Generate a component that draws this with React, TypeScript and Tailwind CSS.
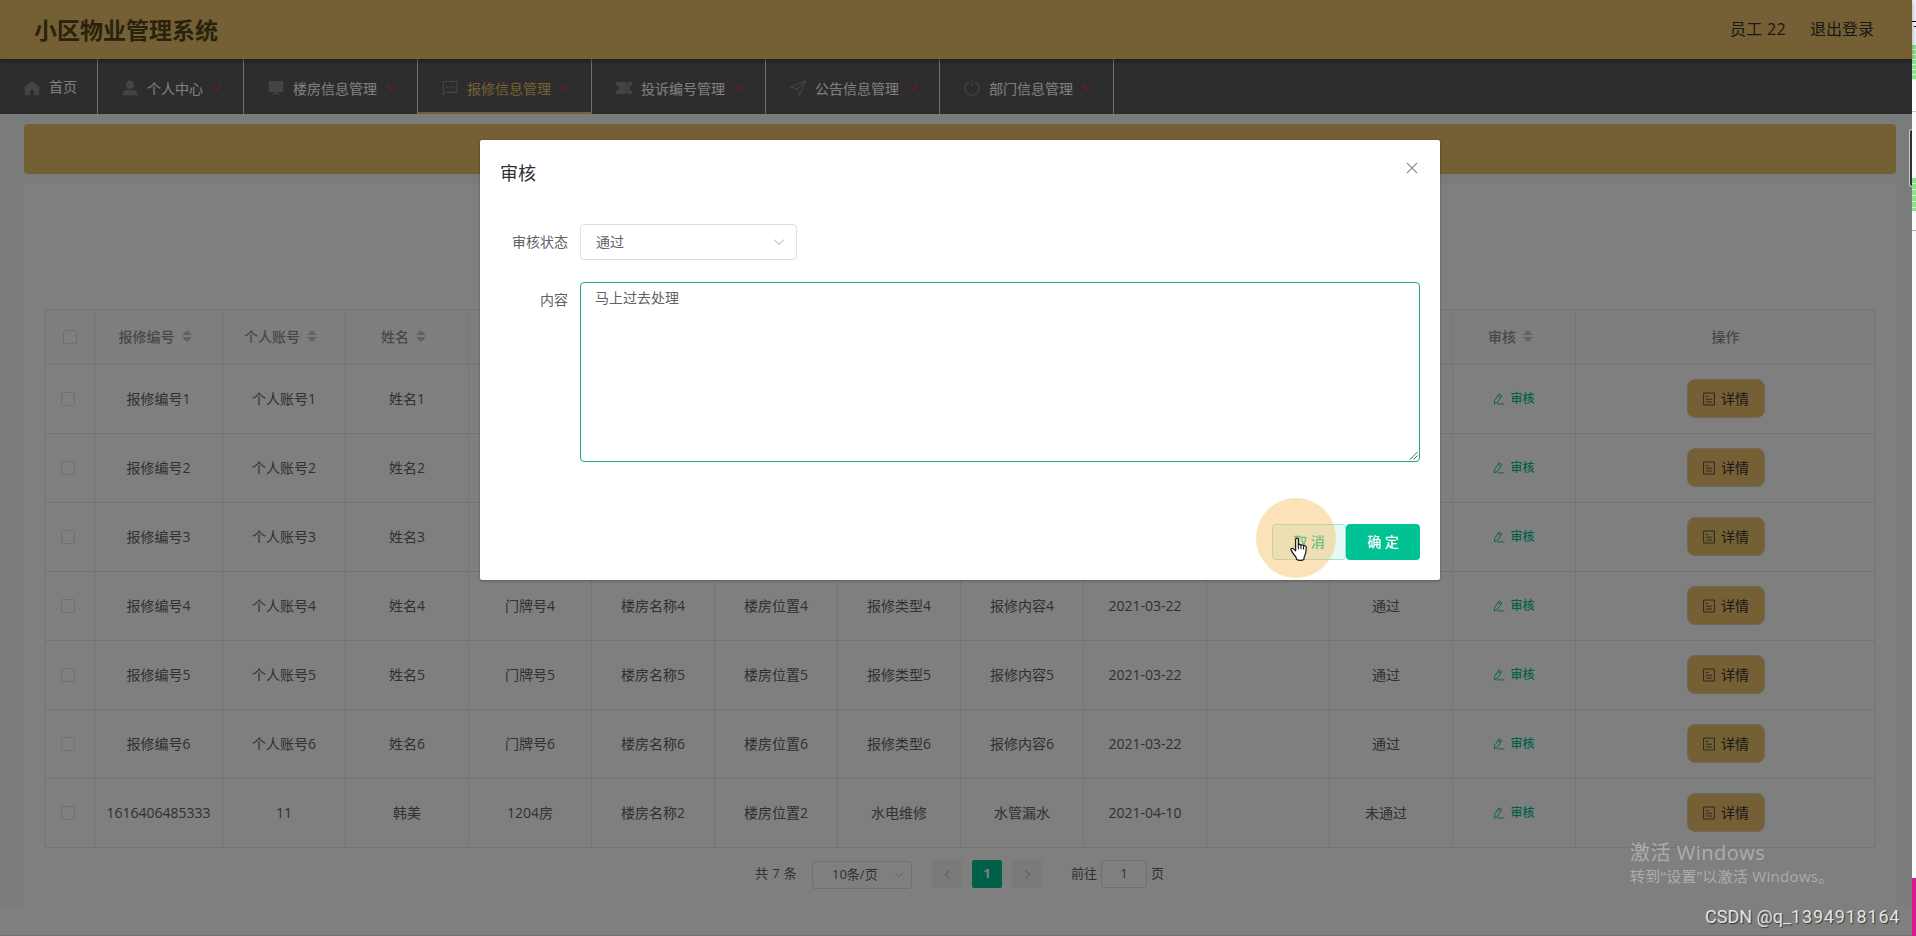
import React from 'react';

const NAV_ITEMS = [
  { title: '首页', icon: 'home' },
  { title: '个人中心', icon: 'user' },
  { title: '楼房信息管理', icon: 'platform' },
  { title: '报修信息管理', icon: 'chat' },
  { title: '投诉编号管理', icon: 'ticket' },
  { title: '公告信息管理', icon: 'position' },
  { title: '部门信息管理', icon: 'power' },
];

const COLUMNS = [
  '报修编号',
  '个人账号',
  '姓名',
  '门牌号',
  '楼房名称',
  '楼房位置',
  '报修类型',
  '报修内容',
  '报修日期',
  '审核回复',
  '审核状态',
  '审核',
];

const ROWS = [
  ...[1, 2, 3, 4, 5, 6].map((n) => [
    `报修编号${n}`,
    `个人账号${n}`,
    `姓名${n}`,
    `门牌号${n}`,
    `楼房名称${n}`,
    `楼房位置${n}`,
    `报修类型${n}`,
    `报修内容${n}`,
    '2021-03-22',
    '',
    n > 3 ? '通过' : '',
  ]),
  ['1616406485333', '11', '韩美', '1204房', '楼房名称2', '楼房位置2', '水电维修', '水管漏水', '2021-04-10', '', '未通过'],
];

const GRID = 'grid grid-cols-[50px_128px_repeat(11,123px)_300px]';

const NavIcon = ({ name }: { name: string }) => (
  <svg viewBox="0 0 18 18" className="h-[18px] w-6 shrink-0" fill="none" stroke="none">
    {name === 'home' && <path fill="currentColor" d="M9 2 2 8v8h5v-5h4v5h5V8z" stroke="currentColor" strokeLinejoin="round" strokeWidth=".6" />}
    {name === 'user' && (
      <g fill="currentColor">
        <ellipse cx="9" cy="5.8" rx="4" ry="4.3" />
        <path d="M1.8 16.3v-1.8c0-2.2 1.6-3.4 3.6-3.4h7.2c2 0 3.6 1.2 3.6 3.4v1.8z" />
      </g>
    )}
    {name === 'platform' && (
      <g fill="currentColor">
        <path d="M1.8 2h14.4v11.2H1.8zM8 13h2v2H8z" />
        <path d="M5 14.8h8v.9H5z" />
      </g>
    )}
    {name === 'chat' && (
      <g stroke="currentColor" strokeWidth="1.1">
        <path d="M4.5 13.4H16V2.5H2.3v13.3z" strokeLinejoin="round" />
        <path d="M5.2 8h1.4M8.3 8h1.4M11.4 8h1.4" strokeWidth="1.4" />
      </g>
    )}
    {name === 'ticket' && (
      <path
        fill="currentColor"
        d="M1 3h9.8v1.6h1.4V3H17v3.4a2.6 2.6 0 0 0 0 5.2V15h-4.8v-1.6h-1.4V15H1v-3.4a2.6 2.6 0 0 0 0-5.2zM10.8 6.3v1.8h1.4V6.3zm0 3.6v1.8h1.4V9.9z"
        fillRule="evenodd"
      />
    )}
    {name === 'position' && <path d="M16.6 1.8 1.2 8l7 1.8 2.2 6.6z M16.6 1.8 8.2 9.8" stroke="currentColor" strokeWidth="1" strokeLinejoin="round" />}
    {name === 'power' && <path d="M6 3.1a7 7 0 1 0 6 0M9 1.4v6" stroke="currentColor" strokeWidth="1.1" />}
  </svg>
);

const Chevron = ({ className }: { className: string }) => (
  <svg viewBox="0 0 12 12" className={className} fill="none" stroke="currentColor" strokeWidth="1.1">
    <path d="m1.2 3.6 4.8 4.8 4.8-4.8" />
  </svg>
);

const SortCaret = () => (
  <svg viewBox="0 0 24 14" className="h-[14px] w-6 text-[#c0c4cc]" fill="currentColor">
    <path d="M12 1 17 6H7zM12 13 7 8h10z" />
  </svg>
);

const Checkbox = () => <span className="block h-[14px] w-[14px] rounded-[2px] border border-[#dcdfe6] bg-white" />;

const Header = () => (
  <header className="relative z-10 flex h-[59px] items-center justify-between bg-[#e8c068] pt-px pr-[38px] pl-[34px] shadow-[0_2px_5px_rgba(0,0,0,0.35)]">
    <h1 className="text-[23px] font-bold text-[#54441a]">小区物业管理系统</h1>
    <div className="flex gap-6 pb-0.5 text-[16px] text-[#333]">
      <span className="tracking-[0.3px]">员工 22</span>
      <span>退出登录</span>
    </div>
  </header>
);

const Nav = () => (
  <nav className="flex h-[55px] bg-[#5b5b5b]">
    {NAV_ITEMS.map((item, index) => (
      <div
        key={item.title}
        className={`flex items-center border-r border-r-[#e0e0e0] pl-5 pr-5 text-[14px] ${
          index === 3 ? 'border-b-2 border-b-[#e8c068] pt-[5px] text-[#e8c068]' : index === 0 ? 'text-white' : 'pt-[3px] text-white'
        }`}
      >
        <span className={`text-[#84888f] ${index === 0 ? 'pt-0.5' : ''}`}>
          <NavIcon name={item.icon} />
        </span>
        <span className={`ml-[5px] ${index === 0 ? 'pb-px' : ''}`}>{item.title}</span>
        {index > 0 && <Chevron className="mb-[3px] ml-2 h-3 w-3 text-[#f03048]" />}
      </div>
    ))}
  </nav>
);

const RepairTable = () => (
  <div className="border-t border-l border-[#e6e8f0] text-[14px]">
    <div className={`${GRID} h-[55px] bg-[#fcfcfc] font-medium text-[#909399]`}>
      <div className="flex items-center justify-center border-r border-b border-[#e6e8f0]">
        <Checkbox />
      </div>
      {COLUMNS.map((title) => (
        <div key={title} className="flex items-center justify-center border-r border-b border-[#e6e8f0] pb-0.5">
          <span>{title}</span>
          <SortCaret />
        </div>
      ))}
      <div className="flex items-center justify-center border-r border-b border-[#e6e8f0] pb-px">操作</div>
    </div>
    {ROWS.map((row) => (
      <div key={row[0]} className={`${GRID} h-[69px] text-[#606266]`}>
        <div className="flex items-center justify-center border-r border-b border-[#e6e8f0] pr-[3px]">
          <Checkbox />
        </div>
        {row.map((cell, index) => (
          <div
            key={index}
            className={`flex items-center justify-center border-r border-b border-[#e6e8f0] pb-0.5 ${index === 10 ? 'pr-[10px]' : ''}`}
          >
            {cell}
          </div>
        ))}
        <div className="flex items-center justify-center gap-[5px] border-r border-b border-[#e6e8f0] text-[12px] font-medium text-[#00c292]">
          <svg viewBox="0 0 12 12" className="h-3 w-3" fill="none" stroke="currentColor" strokeWidth=".9">
            <path d="M1.6 7.6 6 .9l2.8 1.7-4.4 6.8-3 1.5zM5 2.5l2.8 1.7M4.4 10.9h7" />
          </svg>
          审核
        </div>
        <div className="flex items-center justify-center border-r border-b border-[#e6e8f0] pb-px">
          <button className="flex h-[39px] w-[78px] items-center justify-center gap-[5px] rounded-lg border border-[#dcd0a8] bg-[#e8c068] text-[#333]">
            <svg viewBox="0 0 14 14" className="h-[14px] w-[14px]" fill="none" stroke="currentColor" strokeWidth=".8">
              <path d="M1.6 1h10.8v12H1.6zM4 4.5h2.5M4 7.2h6M4 10h6" />
            </svg>
            详情
          </button>
        </div>
      </div>
    ))}
  </div>
);

const Pagination = () => (
  <div className="mt-3 flex h-7 items-center pl-[711px] text-[13px] text-[#606266]">
    <span className="w-[57px] tracking-[0.4px]">共 7 条</span>
    <div className="mt-0.5 flex h-7 w-[100px] items-center rounded-[3px] border border-[#dcdfe6] pl-[19px]">
      <span className="w-[62px] pb-px">10条/页</span>
      <Chevron className="h-[10px] w-[10px] text-[#c0c4cc]" />
    </div>
    <div className="ml-5 flex gap-[10px] font-bold">
      <span className="flex h-7 w-[30px] items-center justify-center rounded-[2px] bg-[#f4f4f5]">
        <Chevron className="h-[11px] w-[11px] rotate-90 text-[#b4b8c0]" />
      </span>
      <span className="flex h-7 w-[30px] items-center justify-center rounded-[2px] bg-[#00c292] text-white">1</span>
      <span className="flex h-7 w-[30px] items-center justify-center rounded-[2px] bg-[#f4f4f5]">
        <Chevron className="h-[11px] w-[11px] -rotate-90 text-[#b4b8c0]" />
      </span>
    </div>
    <span className="ml-[29px]">前往</span>
    <span className="ml-1 flex h-7 w-[46px] items-center justify-center rounded-[3px] border border-[#dcdfe6]">1</span>
    <span className="ml-1">页</span>
  </div>
);

const ReviewDialog = () => (
  <div className="absolute top-[140px] left-[480px] h-[440px] w-[960px] rounded-[2px] bg-white p-5 text-[14px] text-[#606266] shadow-[0_1px_3px_rgba(0,0,0,0.3)]">
    <div className="flex h-6 justify-between">
      <h2 className="pt-px text-[18px] leading-6 text-[#303133]">审核</h2>
      <svg viewBox="0 0 16 16" className="h-4 w-4 text-[#909399]" fill="none" stroke="currentColor" strokeWidth="1.1">
        <path d="m3 3 10 10M13 3 3 13" />
      </svg>
    </div>
    <div className="mt-10 flex h-9 items-center">
      <label className="w-20 pr-3 pb-0.5 text-right">审核状态</label>
      <div className="flex h-9 w-[217px] items-center justify-between rounded-[4px] border border-[#dcdfe6] pr-[11px] pb-px pl-[15px]">
        <span className="pb-px">通过</span>
        <Chevron className="h-3 w-3 text-[#c0c4cc]" />
      </div>
    </div>
    <div className="mt-[22px] flex">
      <label className="w-20 pr-3 text-right leading-9">内容</label>
      <div className="flex h-[180px] w-[840px] justify-between rounded-[4px] border border-[#1fa587] pt-1 pl-[14px] leading-[21px]">
        马上过去处理
        <svg viewBox="0 0 10 10" className="mr-px mb-px h-[9px] w-[9px] self-end text-[#444]" fill="none" stroke="currentColor" strokeWidth="1">
          <path d="M1 9.5 9.5 1M5 9.5 9.5 5" />
        </svg>
      </div>
    </div>
    <div className="mt-[62px] flex justify-end font-medium">
      <button className="h-9 w-[74px] rounded-[4px] border border-[#99e7d3] bg-[#e6f9f4] pb-0.5 text-[#00c292]">取 消</button>
      <button className="h-9 w-[74px] rounded-[4px] bg-[#00c292] pb-0.5 text-white">确 定</button>
    </div>
  </div>
);

// click highlight and hand pointer
const Pointer = () => (
  <>
    <div className="absolute top-[498px] left-[1256px] h-20 w-20 rounded-full bg-[rgba(246,187,92,0.43)]" />
    <svg viewBox="0 0 18 24" className="absolute top-[537px] left-[1290px] h-[25px] w-[19px]">
      <path
        d="M5.3 2.3c0-1.7 2.6-1.7 2.6 0v5.4c.3-1 2.4-.9 2.5.4.5-.8 2.4-.6 2.5.7.6-.8 2.5-.5 2.5 1.2.2 4-.3 6.4-1.6 8.4-.4.8-.6 2-.6 3.3-1.6 1-5.2 1-6.9 0 0-1.5-.7-2.6-1.7-3.7C3.2 16.5 1.7 14 .9 12.6c-.6-1.5 1.1-2.3 2.3-1.2l2.1 2z"
        fill="#fff"
        stroke="#111"
        strokeWidth="1.1"
        strokeLinejoin="round"
      />
      <path d="M7.9 7.7v4M10.4 8.3v3.5M12.9 9v3" stroke="#111" strokeWidth="1" />
    </svg>
  </>
);

const Watermark = () => (
  <>
    <div className="absolute top-[839px] left-[1630px] text-[#adadad]">
      <p className="text-[20px] leading-[28px] tracking-[0.5px]">激活 Windows</p>
      <p className="text-[15px] leading-[19px] tracking-[0.3px]">转到“设置”以激活 Windows。</p>
    </div>
    <p className="absolute top-[903px] left-[1705px] font-[Roboto,sans-serif] text-[18px] leading-[28px] whitespace-nowrap text-[#e4e4e4] [text-shadow:1px_1px_1px_#333]">
      CSDN @q_<span className="tracking-[0.8px]">1394918164</span>
    </p>
  </>
);

const EdgeStrip = () => (
  <div className="flex w-1 flex-col bg-[#fbfbfb]">
    <div className="h-[21px] bg-[#f0f3fa]" />
    <div className="h-px bg-black" />
    <div className="h-[4px]" />
    <div className="h-px w-0.5 self-end bg-black" />
    <div className="h-[18px] bg-[#f0f3fa]" />
    <div className="h-[35px] bg-[repeating-linear-gradient(#8de28d_0_4px,#d5f5d5_4px_5px)]" />
    <div className="h-[31px]" />
    <div className="h-px bg-[#c8c8c8]" />
    <div className="h-[66px]" />
    <div className="h-[33px] bg-[repeating-linear-gradient(#8de28d_0_5px,#d5f5d5_5px_6px)]" />
    <div className="h-[19px]" />
    <div className="h-px bg-[#9ab4b8]" />
    <div className="flex-1" />
    <div className="h-[58px] bg-[#e01890]" />
  </div>
);

const App = () => {
  return (
    <div className="relative flex h-[936px] w-full overflow-hidden bg-white font-['Open_Sans','Noto_Sans_CJK_SC',sans-serif]">
      <div className="relative flex w-[1912px] flex-col">
        <Header />
        <Nav />
        <main className="flex h-[792px] flex-col gap-[10px] bg-[#f5f9f8] pt-[10px] pr-4 pl-6">
          <div className="h-[50px] rounded-[4px] bg-[#e8c068]" />
          <div className="flex-1 bg-white pt-[125px] pr-5 pl-5">
            <RepairTable />
            <Pagination />
          </div>
        </main>
        <div className="absolute top-0 left-0 z-20 h-full w-full border-b border-[#707070] bg-black/50" />
        <div className="absolute top-[129px] right-0 z-20 h-[58px] w-[3px] rounded-l-[3px] border-y border-l border-[#c8c8c8] bg-[#2b2f2e]" />
      </div>
      <EdgeStrip />
      <div className="absolute inset-0 z-30">
        <ReviewDialog />
        <Pointer />
        <Watermark />
      </div>
    </div>
  );
};

export default App;
